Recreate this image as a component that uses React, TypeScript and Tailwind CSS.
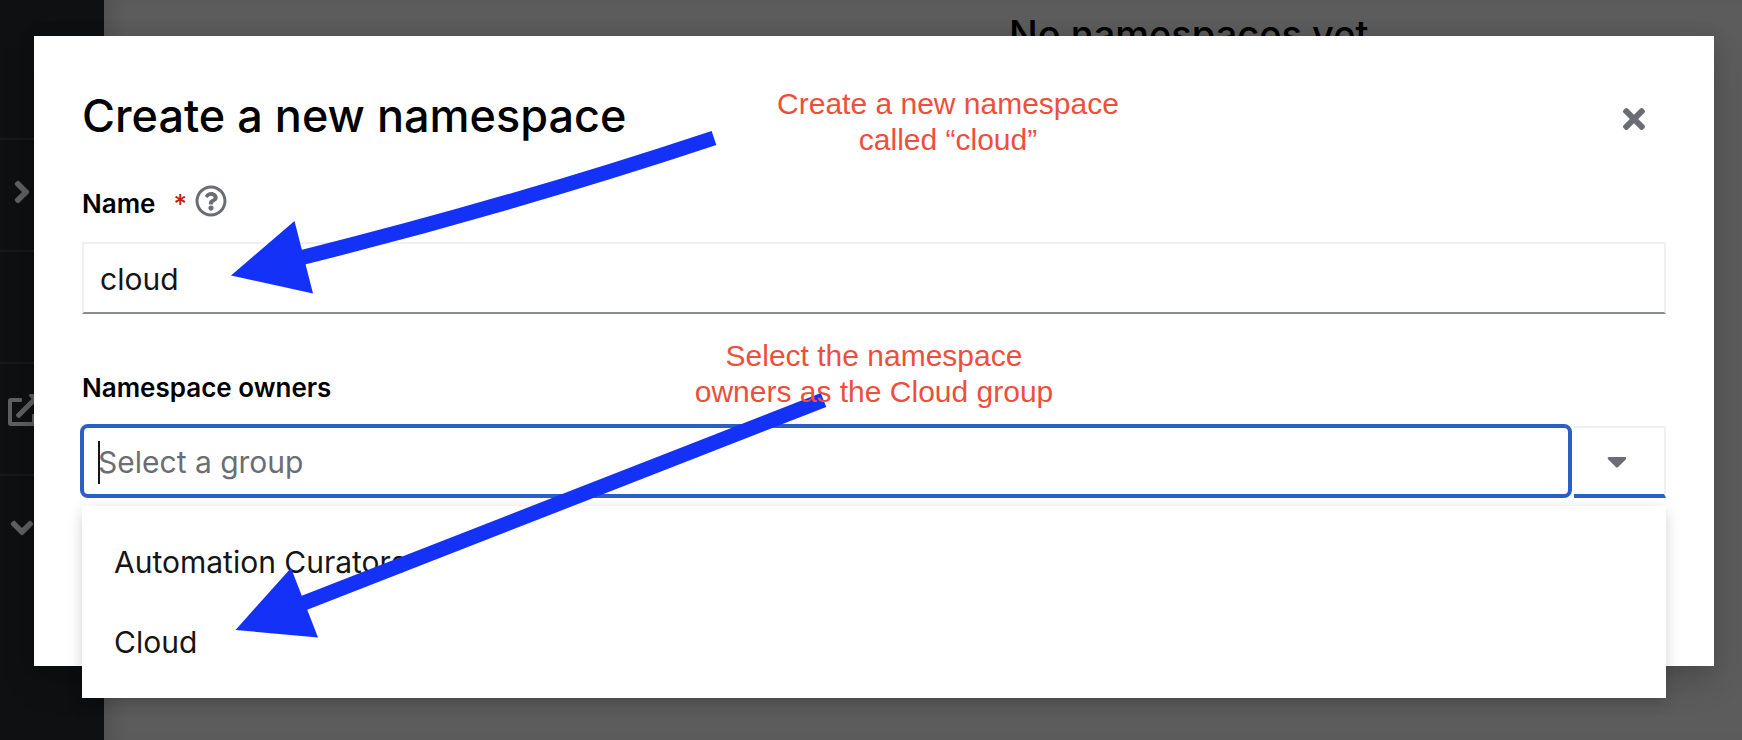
import React from "react";
import {
  FaAngleDown,
  FaAngleRight,
  FaCaretDown,
  FaExternalLinkAlt,
  FaRegQuestionCircle,
  FaTimes,
} from "react-icons/fa";

const groups = ["Automation Curators", "Cloud"];

function Sidebar() {
  const row = "flex h-28 items-center border-t-2 border-[#18191b]";
  return (
    <nav
      aria-label="Main"
      className="w-[104px] shrink-0 bg-[#0f1011] pt-[138px] text-[#606060]"
    >
      <div className={row}>
        <FaAngleRight className="mb-1.5 ml-1 size-9" />
      </div>
      <div className={row} />
      <div className={row}>
        <FaExternalLinkAlt className="mb-[18px] ml-2 size-8" />
      </div>
      <div className={row}>
        <FaAngleDown className="mb-1.5 ml-1 size-9" />
      </div>
    </nav>
  );
}

function GroupSelect() {
  return (
    <div className="relative">
      <div className="flex h-[72px]">
        <div className="relative -ml-0.5 -mt-0.5 flex-1 rounded-lg border-4 border-[#2860c5]">
          <input
            id="owners"
            type="text"
            placeholder="Select a group"
            className="h-full w-full bg-transparent px-[14px] pt-0.5 text-[30px] text-[#151515] outline-none placeholder:text-[#6a6e73]"
          />
          <span className="absolute left-[14px] top-[13px] h-[43px] w-0.5 bg-[#151515]" />
        </div>
        <button
          type="button"
          aria-label="Toggle groups"
          className="ml-0.5 flex w-[92px] items-center justify-center border-b-4 border-r-2 border-t-2 border-b-[#2860c5] border-r-[#f0f0f0] border-t-[#f0f0f0] text-[#6a6e73]"
        >
          <FaCaretDown className="mr-1 size-8" />
        </button>
      </div>
      <ul
        role="listbox"
        aria-label="Groups"
        className="absolute left-0 right-0 top-20 bg-white py-4 shadow-[0_8px_16px_rgba(3,3,3,0.12),0_0_12px_rgba(3,3,3,0.06)]"
      >
        {groups.map((name) => (
          <li
            key={name}
            role="option"
            aria-selected={false}
            className="flex h-20 items-center px-8 text-[30px] text-[#151515]"
          >
            {name}
          </li>
        ))}
      </ul>
    </div>
  );
}

function Annotations() {
  return (
    <div className="pointer-events-none absolute inset-0">
      <svg
        className="absolute left-0 top-0"
        width="900"
        height="700"
        viewBox="0 0 900 700"
        fill="none"
        aria-hidden="true"
      >
        <path d="M300 258Q509 206 714 138" stroke="#1431f8" strokeWidth="15" />
        <path d="M231 275.5 294.5 221 313 293.5Z" fill="#1431f8" />
        <path d="M300 604.5 823.5 400" stroke="#1431f8" strokeWidth="15" />
        <path d="M235.5 630 291 568 318 637.5Z" fill="#1431f8" />
      </svg>
      <p className="absolute left-[748px] top-[86px] w-[400px] text-center font-['Liberation_Sans',Arial,sans-serif] text-[30px] leading-9 text-[#ee4f3d]">
        Create a new namespace
        <br />
        called “cloud”
      </p>
      <p className="absolute left-[674px] top-[338px] w-[400px] text-center font-['Liberation_Sans',Arial,sans-serif] text-[30px] leading-9 text-[#ee4f3d]">
        Select the namespace
        <br />
        owners as the Cloud group
      </p>
    </div>
  );
}

export default function App() {
  return (
    <div className="relative flex min-h-screen overflow-hidden bg-[#5c5c5c] font-['Inter',sans-serif]">
      <Sidebar />
      <main className="flex-1 pl-[905px] pt-2 shadow-[inset_16px_0_16px_-8px_rgba(0,0,0,0.12)]">
        <h2 className="text-[38px] font-medium leading-[52px] text-black">
          No namespaces yet
        </h2>
      </main>

      <div className="absolute inset-0 pb-[74px] pl-[34px] pr-7 pt-9">
        <section
          role="dialog"
          aria-modal="true"
          aria-labelledby="dialog-title"
          className="h-[630px] bg-white px-12 pt-12 shadow-[0_16px_32px_rgba(3,3,3,0.16),0_0_16px_rgba(3,3,3,0.1)]"
        >
          <header className="flex items-center justify-between">
            <h1
              id="dialog-title"
              className="text-[45px] font-medium leading-[64px] text-black"
            >
              Create a new namespace
            </h1>
            <button
              type="button"
              aria-label="Close"
              className="mr-4 mt-1.5 flex size-8 items-center justify-center text-[#6a6e73]"
            >
              <FaTimes className="size-8" />
            </button>
          </header>
          <form className="pt-8">
            <div className="flex h-[42px] items-center">
              <label
                htmlFor="name"
                className="pt-1 text-[26px] font-semibold text-black"
              >
                Name
              </label>
              <span
                aria-hidden="true"
                className="ml-[18px] pt-1 text-[26px] font-medium text-[#c9190b]"
              >
                *
              </span>
              <button
                type="button"
                aria-label="Help for name"
                className="ml-2 text-[#6a6e73]"
              >
                <FaRegQuestionCircle className="size-8" />
              </button>
            </div>
            <input
              id="name"
              type="text"
              defaultValue="cloud"
              className="mt-5 block h-[72px] w-full border-2 border-[#f0f0f0] border-b-[#8a8d90] px-4 pt-0.5 text-[30px] text-[#151515] outline-none"
            />
            <div className="mt-[52px] flex h-10 items-center">
              <label
                htmlFor="owners"
                className="pt-0.5 text-[26px] font-semibold text-black"
              >
                Namespace owners
              </label>
            </div>
            <div className="pt-5">
              <GroupSelect />
            </div>
          </form>
        </section>
      </div>
      <Annotations />
    </div>
  );
}
